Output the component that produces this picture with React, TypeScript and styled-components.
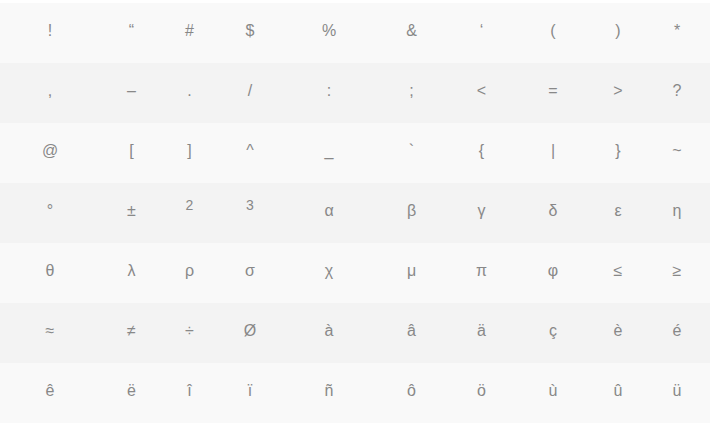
import styled, { createGlobalStyle } from "styled-components";

const GlobalStyle = createGlobalStyle`
  html, body {
    margin: 0;
    padding: 0;
    background: #ffffff;
  }
  body {
    font-family: "Liberation Sans", Arial, sans-serif;
  }
`;

const COLUMNS = "100px 63px 53px 68px 90px 75px 65px 78px 52px 66px";

const Table = styled.div`
  width: 710px;
  margin-top: 3px;
  display: flex;
  flex-direction: column;
`;

const Row = styled.div<{ $alt: boolean }>`
  display: grid;
  grid-template-columns: ${COLUMNS};
  height: 60px;
  background: ${(p) => (p.$alt ? "#f3f3f3" : "#f9f9f9")};
`;

const Cell = styled.div`
  display: flex;
  align-items: center;
  justify-content: center;
  padding-bottom: 5px;
  font-size: 16px;
  color: #888888;
`;

const Char = styled.span`
  line-height: normal;
`;

// superscript digits sit above the baseline of the other glyphs
const Sup = styled.sup`
  font-size: 14px;
  line-height: 0;
  vertical-align: 6px;
`;

type Glyph = string | { sup: string };

const rows: Glyph[][] = [
  ["!", "\u201C", "#", "$", "%", "&", "\u2018", "(", ")", "*"],
  [",", "\u2013", ".", "/", ":", ";", "<", "=", ">", "?"],
  ["@", "[", "]", "^", "_", "`", "{", "|", "}", "~"],
  ["°", "±", { sup: "2" }, { sup: "3" }, "α", "β", "γ", "δ", "ε", "η"],
  ["θ", "λ", "ρ", "σ", "χ", "μ", "π", "φ", "≤", "≥"],
  ["≈", "≠", "÷", "Ø", "à", "â", "ä", "ç", "è", "é"],
  ["ê", "ë", "î", "ï", "ñ", "ô", "ö", "ù", "û", "ü"],
];

export default function App() {
  return (
    <>
      <GlobalStyle />
      <Table>
        {rows.map((row, i) => (
          <Row key={i} $alt={i % 2 === 1}>
            {row.map((g, j) => (
              <Cell key={j}>
                <Char>{typeof g === "string" ? g : <Sup>{g.sup}</Sup>}</Char>
              </Cell>
            ))}
          </Row>
        ))}
      </Table>
    </>
  );
}
